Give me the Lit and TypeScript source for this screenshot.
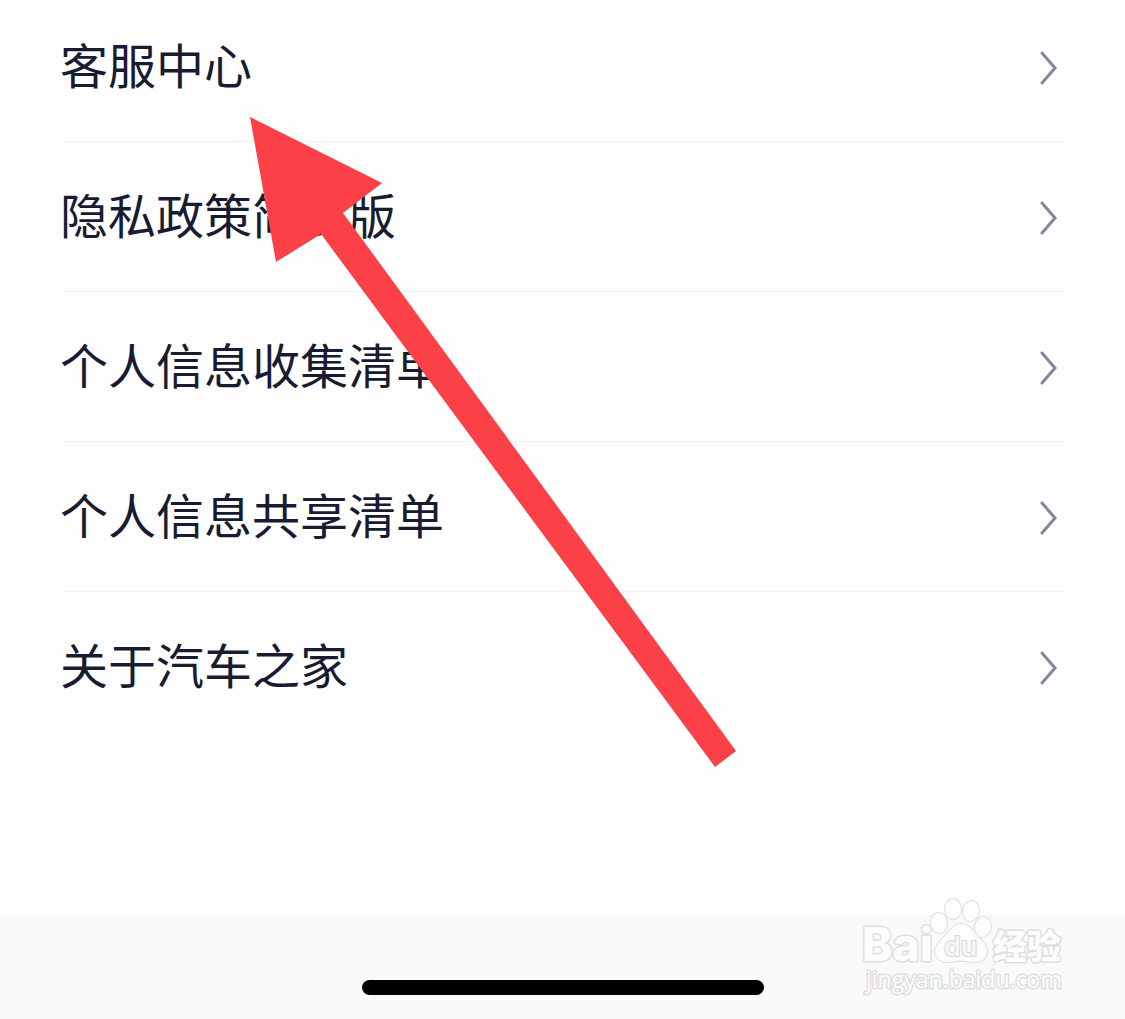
import { LitElement, html, css, svg } from "lit";
import { customElement, property } from "lit/decorators.js";

@customElement("menu-row")
class MenuRow extends LitElement {
  @property() label = "";

  static styles = css`
    :host {
      display: block;
    }
    .row {
      display: flex;
      align-items: center;
      justify-content: space-between;
      box-sizing: border-box;
      min-height: 149px;
      padding: 2px 5px 0 0;
      color: #171c32;
      font-family: "Noto Sans CJK SC", sans-serif;
      font-size: 48px;
      line-height: 72px;
      text-decoration: none;
    }
    .label {
      padding-bottom: 10px;
    }
    .chevron {
      flex: none;
      width: 24px;
      height: 36px;
      fill: none;
      stroke: #85859b;
      stroke-width: 3;
    }
  `;

  render() {
    return html`
      <a class="row" href="#">
        <span class="label">${this.label}</span>
        <svg class="chevron" viewBox="0 0 24 36" aria-hidden="true">
          <path d="M6 3 L19 18 L6 33" stroke-linecap="round" />
        </svg>
      </a>
    `;
  }
}

@customElement("site-mark")
class SiteMark extends LitElement {
  static styles = css`
    :host {
      display: block;
    }
    svg {
      display: block;
      width: 210px;
      height: 108px;
      overflow: visible;
    }
    .shape,
    text {
      fill: #fdfdfd;
      stroke: #dedfdf;
      stroke-width: 3;
      stroke-linejoin: round;
      paint-order: stroke;
    }
    .shape {
      stroke-width: 2;
    }
    .latin {
      font: 800 46px Inter, sans-serif;
    }
    .du {
      font: 600 27px Inter, sans-serif;
      fill: #f4f5f5;
      stroke: #d6d7d7;
      stroke-width: 2;
    }
    .han {
      font: 900 34px "Noto Sans CJK SC", sans-serif;
    }
    .address {
      font: 23px "Open Sans", sans-serif;
    }
  `;

  render() {
    return html`
      <svg viewBox="0 0 210 108" role="img" aria-label="Baidu 经验">
        <text class="latin" x="0" y="69">Bai</text>
        <g class="shape">
          <ellipse cx="77" cy="31" rx="8" ry="10" transform="rotate(-8 77 31)" />
          <ellipse cx="91" cy="17" rx="8" ry="10" />
          <ellipse cx="109" cy="19" rx="8" ry="10" transform="rotate(8 109 19)" />
          <ellipse cx="121" cy="35" rx="8" ry="10" transform="rotate(8 121 35)" />
          <path d="M99 32 C91 32 88 39 83 44 C77 50 73 54 73 60 C74 68 81 71 89 70 C97 68 102 68 109 70 C119 71 125 67 125 59 C125 53 120 49 115 43 C110 37 107 32 99 32Z" />
        </g>
        <text class="du" x="82" y="64">du</text>
        <text class="han" x="131" y="67">经验</text>
        <text class="address" x="4" y="96">jingyan.baidu.com</text>
      </svg>
    `;
  }
}

const ITEMS = [
  "客服中心",
  "隐私政策简要版",
  "个人信息收集清单",
  "个人信息共享清单",
  "关于汽车之家",
];

@customElement("app-root")
class AppRoot extends LitElement {
  static styles = css`
    :host {
      display: block;
    }
    .screen {
      position: relative;
      display: flex;
      flex-direction: column;
      min-height: 100vh;
      overflow: hidden;
      background: #fefefe;
    }
    .menu {
      flex: 1;
      margin: -8px 0 0;
      padding: 0 60px;
      list-style: none;
    }
    .item + .item::before {
      content: "";
      display: block;
      height: 1px;
      margin: 0 0 0 4px;
      background: #f1f2f3;
    }
    .home {
      display: flex;
      justify-content: center;
      align-items: flex-end;
      box-sizing: border-box;
      height: 104px;
      padding-bottom: 24px;
      background: linear-gradient(#f9f9f9 8px, #f9fafc 10px);
    }
    .handle {
      width: 402px;
      height: 15px;
      border-radius: 8px;
      background: #000;
    }
    .pointer {
      position: absolute;
      top: 117px;
      left: 250px;
      width: 486px;
      height: 650px;
      fill: #fc4048;
      pointer-events: none;
    }
    .mark {
      position: absolute;
      right: 53px;
      bottom: 19px;
    }
  `;

  render() {
    return html`
      <main class="screen">
        <ul class="menu">
          ${ITEMS.map(
            (label) => html`<li class="item"><menu-row .label=${label}></menu-row></li>`
          )}
        </ul>
        <div class="home"><div class="handle"></div></div>
        <svg class="pointer" viewBox="0 0 486 650" aria-hidden="true">
          ${svg`<path d="M0 0 L132 66 L93 96 L486 634 L465 650 L71 117 L26 145Z" />`}
        </svg>
        <site-mark class="mark"></site-mark>
      </main>
    `;
  }
}
